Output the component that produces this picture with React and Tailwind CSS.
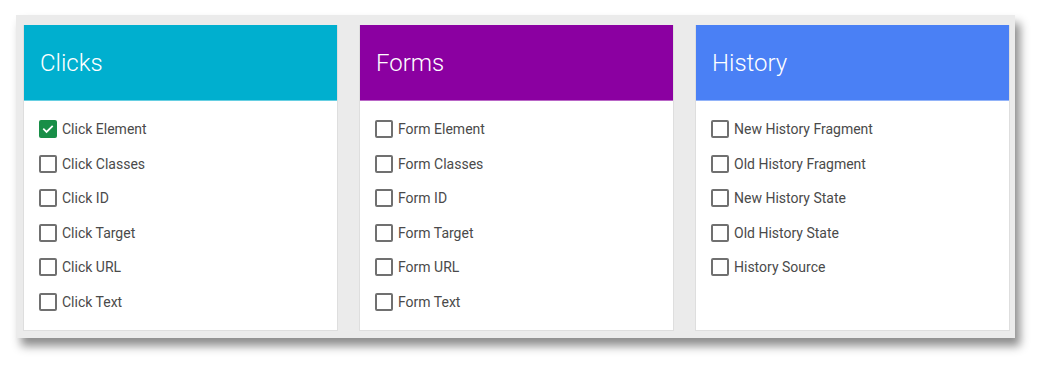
import React from "react";

const groups = [
  {
    title: "Clicks",
    color: "bg-[#00afcf]",
    items: ["Click Element", "Click Classes", "Click ID", "Click Target", "Click URL", "Click Text"],
    checked: [0],
  },
  {
    title: "Forms",
    color: "bg-[#8b00a1]",
    items: ["Form Element", "Form Classes", "Form ID", "Form Target", "Form URL", "Form Text"],
    checked: [],
  },
  {
    title: "History",
    color: "bg-[#4a80f5]",
    items: ["New History Fragment", "Old History Fragment", "New History State", "Old History State", "History Source"],
    checked: [],
  },
];

function Box({ checked }) {
  if (checked) {
    return (
      <span className="w-[18px] h-[18px] rounded-[2px] bg-[#188e47] flex items-center justify-center shrink-0">
        <svg width="14" height="14" viewBox="0 0 24 24" fill="none" stroke="white" strokeWidth="3" strokeLinecap="square">
          <path d="M5 12.5l4.5 4.5L19 7.5" />
        </svg>
      </span>
    );
  }
  return <span className="w-[18px] h-[18px] rounded-[2px] border-2 border-[#707070] bg-white shrink-0" />;
}

export default function App() {
  return (
    <div className="w-[1048px] h-[371px] bg-white pt-[15px] pl-[16px]" style={{ fontFamily: "Roboto, 'Noto Sans', sans-serif" }}>
      <div className="w-[999px] h-[323px] bg-[#ebebeb] pt-[10px] pl-[7px] shadow-[5px_8px_9px_rgba(0,0,0,0.45)] flex gap-[21px]">
        {groups.map((g) => (
          <div key={g.title} className="w-[315px] h-[306px] bg-white border border-[#dedede] border-t-0 flex flex-col">
            <div className={`${g.color} h-[76px] pl-[16px] flex items-center border-b border-white/40`}>
              <span className="text-white text-[24px] font-light leading-none mt-[1px]">{g.title}</span>
            </div>
            <div className="pt-[19px] pl-[15px] flex flex-col gap-[16.5px]">
              {g.items.map((it, i) => (
                <div key={it} className="flex items-center gap-[5px] h-[18px]">
                  <Box checked={g.checked.includes(i)} />
                  <span className="text-[14px] text-[#4a4a4a] leading-none">{it}</span>
                </div>
              ))}
            </div>
          </div>
        ))}
      </div>
    </div>
  );
}
